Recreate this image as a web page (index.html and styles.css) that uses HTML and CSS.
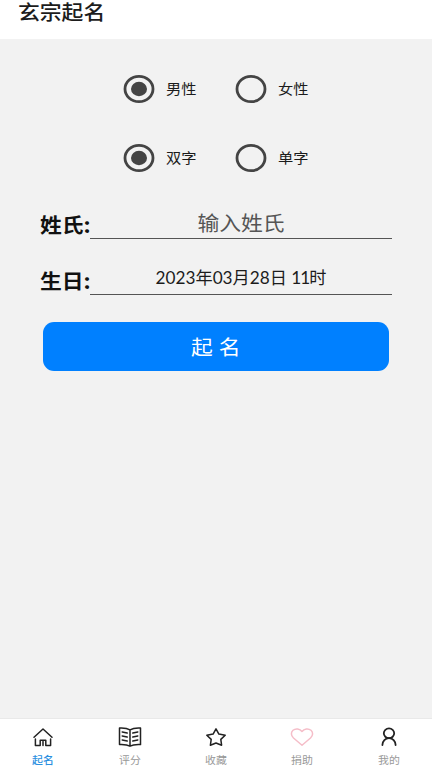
FILE: index.html
```html
<!DOCTYPE html>
<html lang="zh-CN">
<head>
<meta charset="utf-8">
<title>玄宗起名</title>
<link rel="stylesheet" href="styles.css">
</head>
<body>
<header class="header"><h1 class="wide">玄宗起名</h1></header>
<main class="main">
  <div class="options">
    <div class="option"><svg class="radio" viewBox="0 0 32 30"><ellipse class="ring" cx="16" cy="15" rx="14" ry="12.7"/><ellipse class="dot" cx="16" cy="15" rx="8" ry="7.2"/></svg><span class="wide">男性</span></div>
    <div class="option"><svg class="radio" viewBox="0 0 32 30"><ellipse class="ring" cx="16" cy="15" rx="14" ry="12.7"/></svg><span class="wide">女性</span></div>
    <div class="option"><svg class="radio" viewBox="0 0 32 30"><ellipse class="ring" cx="16" cy="15" rx="14" ry="12.7"/><ellipse class="dot" cx="16" cy="15" rx="8" ry="7.2"/></svg><span class="wide">双字</span></div>
    <div class="option"><svg class="radio" viewBox="0 0 32 30"><ellipse class="ring" cx="16" cy="15" rx="14" ry="12.7"/></svg><span class="wide">单字</span></div>
  </div>
  <div class="field"><label class="label"><span class="wide">姓氏:</span></label><div class="value hint"><span class="wide">输入姓氏</span></div></div>
  <div class="field"><label class="label"><span class="wide">生日:</span></label><div class="value date">2023年03月28日 <span class="hour">11</span>时</div></div>
  <button class="submit"><span class="wide">起 名</span></button>
</main>
<nav class="tabs">
  <a class="tab active"><svg class="icon" viewBox="0 0 26 24"><path d="M4 12.2 13 4l9 8.2M5.4 14v6.4h4.800v-5.200h5.600v5.200h4.800V14M13 16.500v3.900"/></svg><span class="wide">起名</span></a>
  <a class="tab"><svg class="icon" viewBox="0 0 26 24"><path d="M13 4.800C10 3 6 2.800 2.500 3v16.600c4-.2 7.700 0 10.500 1.600 2.800-1.600 6.500-1.800 10.500-1.600V3C20 2.800 16 3 13 4.800zM13 5v16M5.200 7l5 1M5.200 11l5 1M5.200 15l5 1M20.800 7l-5 1M20.800 11l-5 1M20.800 15l-5 1"/></svg><span class="wide">评分</span></a>
  <a class="tab"><svg class="icon" viewBox="0 0 26 24"><path d="m13 3.800 2.900 5.300 6.300 1.200-4.400 4.100.8 5.800L13 18l-5.600 2.200.8-5.800-4.400-4.100 6.300-1.200z"/></svg><span class="wide">收藏</span></a>
  <a class="tab"><svg class="icon pink" viewBox="0 0 26 24"><path d="M13 20.200 4.500 13C1.900 10.600 1.700 7.300 4 5.300c2.600-2.200 6.900-1.700 9 1.200 2.100-2.900 6.400-3.400 9-1.200 2.300 2 2.100 5.300-.5 7.700z"/></svg><span class="wide">捐助</span></a>
  <a class="tab"><svg class="icon person" viewBox="0 0 26 24"><ellipse cx="13" cy="8.300" rx="5.200" ry="4.900"/><path d="M6.400 20c0-4 3-6.800 6.600-6.800s6.600 2.800 6.600 6.800"/></svg><span class="wide">我的</span></a>
</nav>
</body>
</html>
```
FILE: styles.css
```css
* { box-sizing: border-box; }
body {
  margin: 0;
  height: 768px;
  overflow: hidden;
  display: flex;
  flex-direction: column;
  background: #f2f2f2;
  color: #1c1c1c;
  font-family: "Noto Sans CJK SC", sans-serif;
}
.wide { display: inline-block; transform: scaleX(1.09); white-space: pre; }
.header { height: 39px; padding-left: 18px; background: #fff; }
.header h1 {
  margin: 0;
  font-size: 20px;
  font-weight: 500;
  line-height: 24px;
  transform-origin: left;
}
.main { flex: 1; padding-top: 35px; }
.options {
  display: grid;
  grid-template-columns: 112px 112px;
  grid-template-rows: 30px 30px;
  row-gap: 39px;
  margin-left: 123px;
}
.option { display: flex; align-items: center; gap: 11px; font-size: 14px; line-height: 28px; }
.option .wide { transform-origin: left; margin-top: -2px; }
.radio { width: 32px; height: 30px; flex: none; }
.ring { fill: none; stroke: #444; stroke-width: 2.800; }
.dot { fill: #444; }
.field {
  display: flex;
  height: 56px;
  padding: 0 40px;
}
.options + .field { margin-top: 11px; }
.label {
  width: 50px;
  padding-top: 26px;
  font-size: 20px;
  font-weight: 700;
  line-height: 30px;
  color: #111;
}
.label .wide { transform-origin: left; }
.value {
  flex: 1;
  height: 55px;
  border-bottom: 1.500px solid #555;
  text-align: center;
}
.hint { font-size: 20px; line-height: 30px; padding-top: 24px; color: #555; }
.date {
  font-family: Lato, "Noto Sans CJK SC", sans-serif;
  font-size: 17.200px;
  line-height: 30px;
  padding-top: 23px;
}
.hour { letter-spacing: -1px; }
.submit {
  display: block;
  width: 346px;
  height: 49px;
  margin: 26px 0 0 43px;
  padding: 0;
  border: 0;
  border-radius: 11px;
  background: #0080ff;
  color: #fff;
  font: 400 20px/49px "Noto Sans CJK SC", sans-serif;
  word-spacing: 1px;
}
.tabs {
  height: 50px;
  display: grid;
  grid-template-columns: repeat(5, 1fr);
  background: #fff;
  border-top: 1px solid #e9e9e9;
}
.tab {
  display: flex;
  flex-direction: column;
  align-items: center;
  padding-top: 6px;
  font-size: 10px;
  line-height: 14px;
  color: #999;
}
.active { color: #2b8fe0; font-weight: 500; }
.icon {
  width: 26px;
  height: 24px;
  margin-bottom: 4px;
  fill: none;
  stroke: #222;
  stroke-width: 1.500;
  stroke-linejoin: round;
  stroke-linecap: round;
}
.pink { stroke: #f5bdc8; }
.person { stroke-width: 1.800; }
```
